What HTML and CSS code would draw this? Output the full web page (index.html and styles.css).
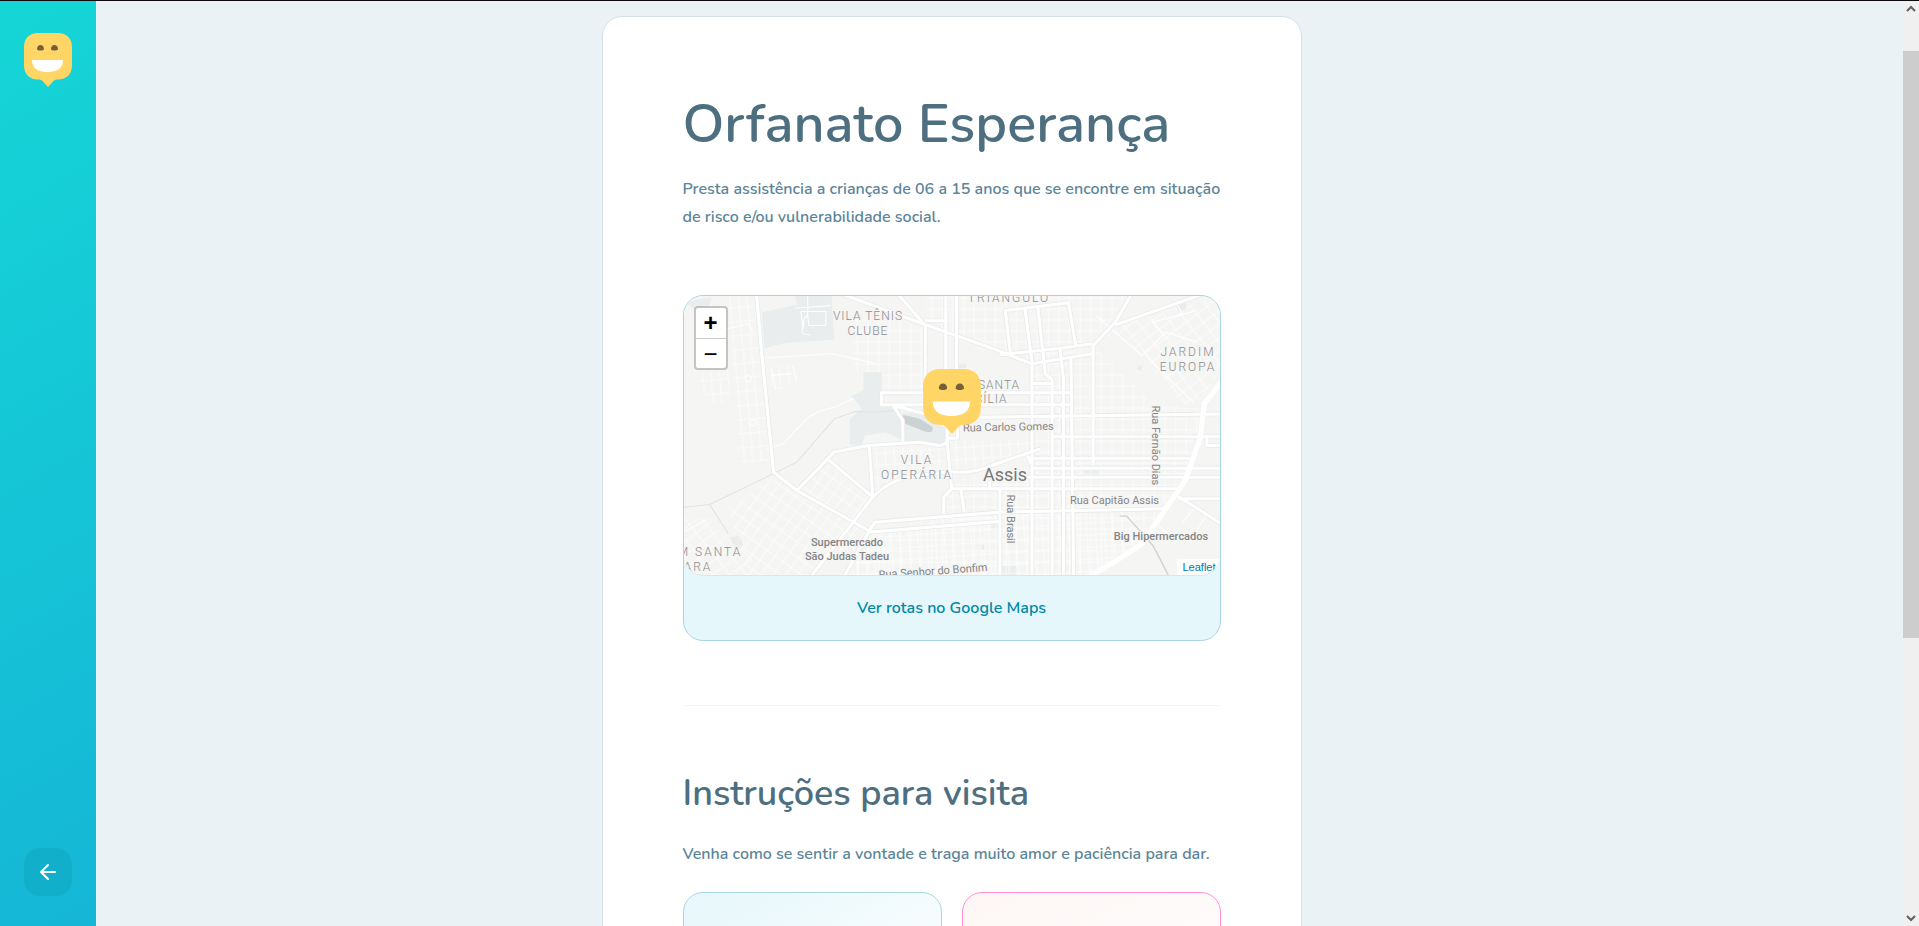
FILE: index.html
```html
<!DOCTYPE html>
<html lang="pt-BR">
<head>
<meta charset="utf-8">
<title>Orfanato Esperança</title>
<meta name="viewport" content="width=device-width, initial-scale=1">
<link rel="stylesheet" href="styles.css">
</head>
<body>
<svg class="sprite" aria-hidden="true">
  <symbol id="happy" viewBox="0 0 48 54">
    <path fill="#ffd666" d="M14 0H34C42.500 0 48 5.500 48 14V32.500C48 41 42.500 46.500 34 46.500H33C31.500 46.500 30.600 47 29.500 48L24 54L18.500 48C17.400 47 16.500 46.500 15 46.500H14C5.500 46.500 0 41 0 32.500V14C0 5.500 5.500 0 14 0Z"/>
    <path fill="#76603a" d="M13 16C13 10.700 20 10.700 20 16C20 18 13 18 13 16ZM27 16C27 10.700 34 10.700 34 16C34 18 27 18 27 16Z"/>
    <path fill="#fff" d="M8 27H39C39 35 33.500 39 23.500 39S8 35 8 27Z"/>
  </symbol>
</svg>
<div class="page">
  <aside class="sidebar">
    <svg class="sidebar-logo" role="img" aria-label="Happy"><use href="#happy"/></svg>
    <button class="back" type="button" aria-label="Voltar">
      <svg viewBox="0 0 24 24" fill="none" stroke="currentColor" stroke-width="2" stroke-linecap="round" stroke-linejoin="round"><path d="M19 12H5M12 19L5 12L12 5"/></svg>
    </button>
  </aside>

  <main class="content">
    <article class="details">
      <h1>Orfanato Esperança</h1>
      <p>Presta assistência a crianças de 06 a 15 anos que se encontre em situação de risco e/ou vulnerabilidade social.</p>

      <section class="map-card" aria-label="Mapa">
        <div class="map">
          <svg class="map-tiles" viewBox="0 0 536 280" preserveAspectRatio="xMidYMid slice" aria-hidden="true">
            <defs>
              <pattern id="grid" width="31" height="33" patternUnits="userSpaceOnUse"><path d="M0 8H31M12 0V33" class="minor"/></pattern>
              <pattern id="blocks" width="26" height="36" patternUnits="userSpaceOnUse" patternTransform="rotate(-4)"><path d="M0 8H26M8 0V36" class="minor"/></pattern>
              <pattern id="west" width="25" height="42" patternUnits="userSpaceOnUse" patternTransform="rotate(-5)"><path d="M0 8H25M8 0V42" class="minor"/></pattern>
              <pattern id="slant" width="29" height="36" patternUnits="userSpaceOnUse" patternTransform="rotate(36)"><path d="M0 8H29M8 0V36" class="minor"/></pattern>
              <pattern id="diagonal" width="38" height="32" patternUnits="userSpaceOnUse" patternTransform="rotate(-38)"><path d="M0 8H38M8 0V32" class="minor"/></pattern>
              <g id="roads">
                <path class="wide" d="M212 -5L228 180L262 530L330 585L540 705"/>
                <path class="wide" d="M460 -5L700 85L900 158L1018 205"/>
                <path class="wide" d="M1310 -5L1262 80L1197 150V510M1262 88L1520 -5"/>
                <path class="widest" d="M1580 248L1522 325L1510 430L1466 555L1340 745C1290 780 1230 820 1180 845"/>
                <path class="wide" d="M625 -5L706 90V300M706 76H762M766 -5V240M797 -5V240M770 400V440L783 580L760 605V655M770 428H800V395"/>
                <path class="wide" d="M1018 205L1105 190L1195 175M925 178L1100 158L1195 145M955 175L940 45L1125 22L1146 150M997 35L1018 200V845M1035 32L1057 235L1077 252V845M1100 158L1110 250V845M1132 185L1140 845"/>
                <path class="wide" d="M705 328H578V292H1132M850 328H1132M612 330L710 356M868 365L1580 355M1080 424H1580M1018 488H1485M1020 518H1580M1000 545H1580M785 580H1450M1018 264H1077"/>
                <path class="wide" d="M370 845L552 605Q610 545 690 540L780 528Q840 538 900 510L1042 460M552 605L420 490M330 585L402 510L438 470L540 450L690 440L745 450Q770 450 770 430M542 450L552 600M612 330L640 375V440"/>
                <path class="wide" d="M540 710L558 680L920 650L1410 640M540 710L920 678M540 710L468 845M810 580L820 650M924 580V845M894 560V580M1005 480L1018 510"/>
                <path class="wide" d="M1445 602L1580 690M1445 610H1580M1580 450H1530V420"/>
              </g>
            </defs>
            <rect width="536" height="280" fill="#f5f5f4"/>
            <g transform="scale(.3418 .3333)">
              <path class="park" d="M228 50L330 28L325 0H432L440 132L300 142L235 158ZM0 20L80 5L75 30L30 40ZM525 230H578V325L635 345L640 435L590 410L530 420L520 448H485V370L520 340L490 300L525 285ZM640 350L710 360L765 400V445L690 440L640 435ZM1170 525H1215V543H1170ZM900 682H920V706H900ZM930 812H975V840H930ZM135 725L165 720L172 750L150 765ZM1440 25L1470 20V45L1445 55ZM803 205H826V218H803ZM1322 220L1340 208V228ZM1493 415H1508V440H1493ZM868 748H880V762H868Z"/>
              <path d="M125 0H215L258 495L165 505ZM38 232L130 225L135 325L72 328ZM255 212L320 206L330 260L275 285L255 270Z" fill="url(#west)"/>
              <path d="M495 45L700 95V290H580V230H495ZM706 0H1300L1197 150L1380 330L1510 340V440L1440 600L1340 740L1180 840H480L560 710L770 650V540H1018V205L706 90Z" fill="url(#grid)"/>
              <path d="M785 430H1010V480L840 530H785ZM560 455H755V530L620 570L552 590ZM925 650H1330V740L1180 840H480L560 710Z" fill="url(#blocks)"/>
              <path d="M262 545L540 710L370 840H190L130 640ZM345 545L435 475L552 605L515 680L350 595Z" fill="url(#slant)"/>
              <path d="M0 665L60 670L200 790V840H0ZM1262 90L1568 5V230L1515 310L1460 330L1330 170Z" fill="url(#diagonal)"/>
              <path class="street" d="M235 188L430 174L500 190L560 204M242 460L290 445L345 385Q370 350 440 335L495 310M255 215L268 280M318 210L330 258M255 240L315 235M325 38L430 30M362 0V60L365 90H415V48H342L348 100M360 60Q345 75 350 90Q335 120 370 118M0 710L70 670M1205 60L1340 180L1410 110L1500 140M1350 180L1490 320M1400 115L1370 80L1500 45M1440 20L1460 60M1490 640L1460 680M1530 660L1500 700M1390 690L1440 740M80 110L190 85L200 110"/>
              <g fill="#f5f5f4" stroke="#fff" stroke-width="3"><circle cx="188" cy="250" r="9"/><circle cx="202" cy="382" r="9"/></g>
              <path class="creek" d="M0 635L75 627L130 715M75 627L110 610L255 538L330 500L440 370L500 348L560 350L620 345"/>
              <path d="M640 358L690 370L728 395Q730 415 705 408L640 382Z" fill="#cbd2d3"/>
              <path class="canal" d="M1275 662H1295L1372 750L1420 845"/>
              <use href="#roads" class="casing"/>
              <use href="#roads" class="fill"/>
            </g>
            <g class="area">
              <text x="184" y="24">VILA TÊNIS</text><text x="184" y="39">CLUBE</text>
              <text x="315" y="93">SANTA</text><text x="307" y="107">CÍLIA</text>
            </g>
            <g class="area spaced">
              <text x="325" y="6">TRIANGULO</text>
              <text x="504" y="60">JARDIM</text><text x="504" y="75">EUROPA</text>
              <text x="233" y="168">VILA</text><text x="233" y="183">OPERÁRIA</text>
              <text x="26" y="260">M SANTA</text><text x="14" y="275">ARA</text>
            </g>
            <g class="street-name">
              <text x="279" y="136" transform="rotate(-1 279 136)">Rua Carlos Gomes</text>
              <text x="386" y="208">Rua Capitão Assis</text>
              <text x="195" y="283" transform="rotate(-4 195 283)">Rua Senhor do Bonfim</text>
              <text transform="translate(468 110) rotate(90)">Rua Fernão Dias</text>
              <text transform="translate(323 199) rotate(90)">Rua Brasil</text>
            </g>
            <g class="place">
              <text x="163" y="250">Supermercado</text><text x="163" y="264">São Judas Tadeu</text>
              <text x="477" y="244">Big Hipermercados</text>
              <text x="321" y="185" class="city">Assis</text>
            </g>
          </svg>
          <svg class="marker" role="img" aria-label="Orfanato Esperança"><use href="#happy"/></svg>
          <div class="zoom">
            <button type="button" aria-label="Aproximar">+</button>
            <button type="button" aria-label="Afastar">−</button>
          </div>
          <a class="credit" href="#leaflet">Leaflet</a>
        </div>
        <a class="routes" href="#rotas">Ver rotas no Google Maps</a>
      </section>

      <hr>

      <h2>Instruções para visita</h2>
      <p>Venha como se sentir a vontade e traga muito amor e paciência para dar.</p>
      <div class="visit">
        <div class="visit-card hours"></div>
        <div class="visit-card weekend"></div>
      </div>
    </article>
  </main>

  <div class="scrollbar" aria-hidden="true">
    <svg viewBox="0 0 16 16"><path d="M4 10L8 6L12 10"/></svg>
    <div class="track"><div class="thumb"></div></div>
    <svg viewBox="0 0 16 16"><path d="M4 6L8 10L12 6"/></svg>
  </div>
</div>
</body>
</html>
```
FILE: styles.css
```css
* { box-sizing: border-box; margin: 0; padding: 0; }

body {
  background: #ebf2f5;
  color: #5c8599;
  font: 600 16px/28px Nunito, "Open Sans", "Noto Sans", sans-serif;
}

button { font: inherit; border: 0; cursor: pointer; }
a { text-decoration: none; }
.sprite { position: absolute; width: 0; height: 0; }

.page {
  display: flex;
  height: 100vh;
  overflow: hidden;
  border-top: 1px solid #0c0c10;
}

.sidebar {
  flex: 0 0 96px;
  display: flex;
  flex-direction: column;
  align-items: center;
  justify-content: space-between;
  padding: 32px 24px 30px;
  background: linear-gradient(329.54deg, #15b6d6 0%, #15d6d6 100%);
}
.sidebar-logo { width: 48px; height: 54px; }
.back {
  display: flex;
  align-items: center;
  justify-content: center;
  width: 48px;
  height: 48px;
  border-radius: 16px;
  background: #12afcb;
  color: #fff;
}
.back svg { width: 24px; height: 24px; }

.content {
  flex: 1;
  display: flex;
  justify-content: center;
  align-items: flex-start;
  padding: 15px 96px 0 0;
}
.details {
  flex: 0 1 700px;
  padding: 80px;
  background: #fff;
  border: 1px solid #d3e2e5;
  border-radius: 20px;
}
h1 { color: #4d6f80; font-size: 54px; font-weight: 600; line-height: 54px; }
h2 { color: #4d6f80; font-size: 36px; font-weight: 600; line-height: 48px; }
h1 + p { margin-top: 24px; }
h2 + p { margin-top: 22px; }
hr { height: 1px; border: 0; background: #f2f5f6; margin: 64px 0; }

.map-card {
  margin-top: 64px;
  background: #e6f7fb;
  border: 1px solid #a8d6e0;
  border-radius: 20px;
  overflow: hidden;
}
.map {
  position: relative;
  height: 280px;
  border-bottom: 1px solid #dde3f0;
  border-radius: 0 0 20px 20px;
  overflow: hidden;
}
.map-tiles { display: block; width: 100%; height: 100%; }
.marker {
  position: absolute;
  top: 73px;
  left: calc(50% - 29px);
  width: 58px;
  height: 65px;
}
.zoom {
  position: absolute;
  top: 10px;
  left: 10px;
  width: 34px;
  border: 2px solid rgba(0, 0, 0, .2);
  border-radius: 4px;
  background: #fff;
  background-clip: padding-box;
}
.zoom button {
  display: block;
  width: 30px;
  height: 30px;
  background: transparent;
  color: #000;
  font: bold 24px/30px "Liberation Sans", sans-serif;
}
.zoom button:first-child { height: 31px; border-bottom: 1px solid #ccc; }
.zoom button:last-child { height: 29px; line-height: 29px; font-weight: 400; }
.credit {
  position: absolute;
  right: 0;
  bottom: 0;
  padding: 0 4px 0 5px;
  background: rgba(255, 255, 255, .7);
  color: #0078a8;
  font: 11px/16px "Liberation Sans", sans-serif;
}
.routes {
  display: block;
  padding: 18px;
  color: #0089a5;
  text-align: center;
}

.minor, .street { fill: none; stroke: #fff; stroke-width: 3; }
.minor { stroke-width: 2; }
.park { fill: #eaeded; }
.creek { fill: none; stroke: #e0e2e2; stroke-width: 3; }
.canal { fill: none; stroke: #ccd2d2; stroke-width: 4; }
#roads { fill: none; stroke-linejoin: round; }
.casing { stroke: #e9ebeb; stroke-width: 14; }
.fill { stroke: #fff; stroke-width: 9; }
.widest { stroke-width: 16; }
.area, .street-name, .place {
  font-family: Roboto, sans-serif;
  font-weight: 400;
  paint-order: stroke;
  stroke: #f5f5f4;
  stroke-width: 2px;
}
.area { font-size: 12px; font-weight: 300; fill: #8c8c8c; letter-spacing: 1px; text-anchor: middle; }
.spaced { letter-spacing: 2px; }
.street-name { font-size: 11px; fill: #858585; }
.place { font-size: 11px; font-weight: 500; fill: #858585; text-anchor: middle; }
.city { font-size: 18px; fill: #777; font-weight: 400; }

.visit { display: grid; grid-template-columns: 1fr 1fr; gap: 20px; margin-top: 24px; }
.visit-card { height: 160px; border: 1px solid #a8d6e0; border-radius: 20px; }
.hours { background: linear-gradient(150deg, #e6f7fb 0%, #fff 90%); }
.weekend { background: linear-gradient(155deg, #fdf6f4 0%, #fff 90%); border-color: #ff8fd2; }

.scrollbar {
  flex: 0 0 16px;
  display: flex;
  flex-direction: column;
  background: #f0f0f0;
}
.scrollbar svg { height: 16px; fill: none; stroke: #606060; stroke-width: 2; }
.track { flex: 1; padding-top: 34px; }
.thumb { height: 68.3%; background: #cdcdcd; }
```
